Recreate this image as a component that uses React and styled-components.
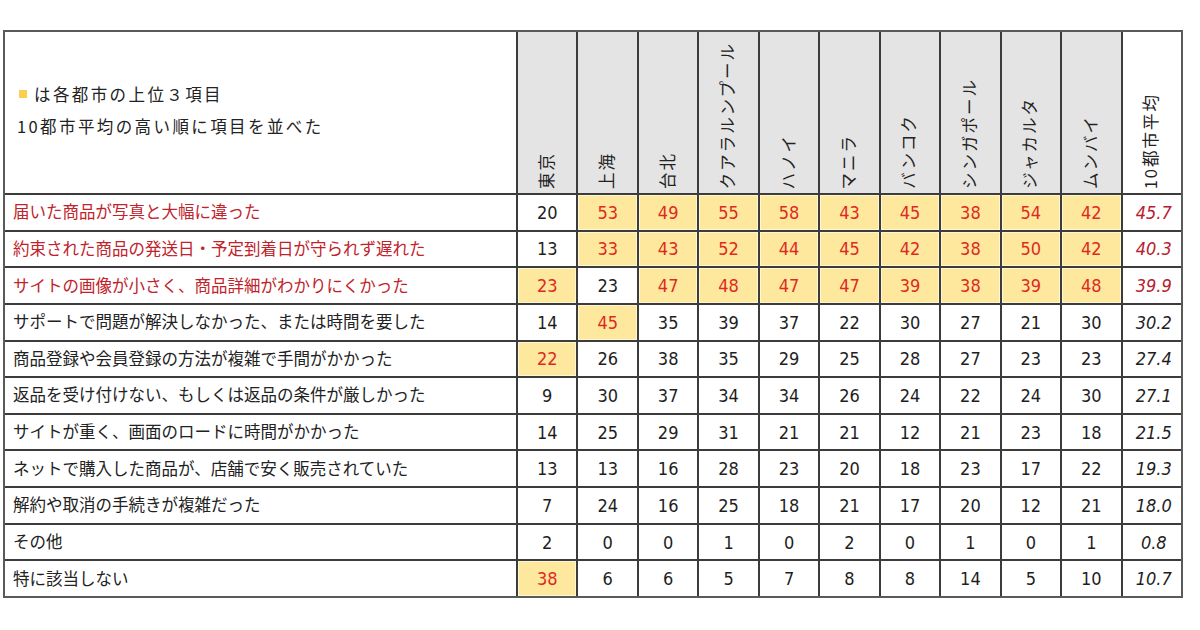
import styled, { createGlobalStyle } from 'styled-components';

const GlobalStyle = createGlobalStyle`
  html, body {
    margin: 0;
    padding: 0;
    background: #fff;
  }
  body {
    font-family: "Noto Sans CJK JP", "Noto Sans", sans-serif;
    color: #222;
  }
`;

const cities = [
  '東京', '上海', '台北', 'クアラルンプール', 'ハノイ',
  'マニラ', 'バンコク', 'シンガポール', 'ジャカルタ', 'ムンバイ',
];

const rows = [
  { label: '届いた商品が写真と大幅に違った', top: true, v: [20, 53, 49, 55, 58, 43, 45, 38, 54, 42], avg: '45.7', h: [1, 2, 3, 4, 5, 6, 7, 8, 9] },
  { label: '約束された商品の発送日・予定到着日が守られず遅れた', top: true, v: [13, 33, 43, 52, 44, 45, 42, 38, 50, 42], avg: '40.3', h: [1, 2, 3, 4, 5, 6, 7, 8, 9] },
  { label: 'サイトの画像が小さく、商品詳細がわかりにくかった', top: true, v: [23, 23, 47, 48, 47, 47, 39, 38, 39, 48], avg: '39.9', h: [0, 2, 3, 4, 5, 6, 7, 8, 9] },
  { label: 'サポートで問題が解決しなかった、または時間を要した', v: [14, 45, 35, 39, 37, 22, 30, 27, 21, 30], avg: '30.2', h: [1] },
  { label: '商品登録や会員登録の方法が複雑で手間がかかった', v: [22, 26, 38, 35, 29, 25, 28, 27, 23, 23], avg: '27.4', h: [0] },
  { label: '返品を受け付けない、もしくは返品の条件が厳しかった', v: [9, 30, 37, 34, 34, 26, 24, 22, 24, 30], avg: '27.1', h: [] },
  { label: 'サイトが重く、画面のロードに時間がかかった', v: [14, 25, 29, 31, 21, 21, 12, 21, 23, 18], avg: '21.5', h: [] },
  { label: 'ネットで購入した商品が、店舗で安く販売されていた', v: [13, 13, 16, 28, 23, 20, 18, 23, 17, 22], avg: '19.3', h: [] },
  { label: '解約や取消の手続きが複雑だった', v: [7, 24, 16, 25, 18, 21, 17, 20, 12, 21], avg: '18.0', h: [] },
  { label: 'その他', v: [2, 0, 0, 1, 0, 2, 0, 1, 0, 1], avg: '0.8', h: [] },
  { label: '特に該当しない', v: [38, 6, 6, 5, 7, 8, 8, 14, 5, 10], avg: '10.7', h: [0] },
];

const Page = styled.div`
  padding: 30px 0 0 3px;
`;

const Grid = styled.div`
  width: 1180px;
  height: 568px;
  box-sizing: border-box;
  display: grid;
  grid-template-columns: 511px repeat(11, 1fr);
  grid-template-rows: 161px repeat(11, 1fr);
  gap: 2px;
  background: #3c3c3c;
  border: 2px solid #5a5a5a;
`;

const NoteCell = styled.div`
  background: #fff;
  display: flex;
  flex-direction: column;
  justify-content: center;
  padding: 0 0 6px 12px;
  font-size: 16.5px;
  letter-spacing: 2.4px;
  line-height: 32px;
  color: #222;
`;

const NoteLine = styled.div`
  display: flex;
  align-items: center;
`;

const Swatch = styled.span`
  width: 8px;
  height: 8px;
  background: #fccf4e;
  margin: 0 7px 0 2px;
`;

const HeadCell = styled.div`
  background: ${(p) => (p.$plain ? '#fff' : '#e4e4e4')};
  display: flex;
  align-items: flex-end;
  justify-content: center;
  padding-bottom: 4px;
  padding-right: 3px;
`;

const VText = styled.span`
  writing-mode: vertical-rl;
  text-orientation: sideways;
  transform: rotate(180deg);
  font-size: 16.5px;
  letter-spacing: 2px;
  line-height: 20px;
  color: #222;
  white-space: nowrap;
`;

const LabelCell = styled.div`
  background: #fff;
  display: flex;
  align-items: center;
  padding-left: 8px;
  padding-bottom: 2px;
  font-size: 16.5px;
  color: ${(p) => (p.$top ? '#c1232b' : '#222')};
  white-space: nowrap;
  overflow: hidden;
`;

const NumCell = styled.div`
  background: ${(p) => (p.$hl ? '#fee89e' : '#fff')};
  box-shadow: ${(p) => (p.$hl ? 'inset 0 0 0 1px #fff6d2' : 'none')};
  display: flex;
  align-items: center;
  justify-content: center;
  font-family: "DejaVu Sans Condensed", "DejaVu Sans", sans-serif;
  font-size: 18px;
  color: ${(p) => (p.$hl ? '#de2a22' : '#1e1e1e')};
`;

const AvgCell = styled(NumCell)`
  font-style: italic;
  padding-left: 4px;
  color: ${(p) => (p.$top ? '#b8202e' : '#1e1e1e')};
`;

export default function App() {
  return (
    <>
      <GlobalStyle />
      <Page>
        <Grid>
          <NoteCell>
            <NoteLine>
              <Swatch />
              は各都市の上位３項目
            </NoteLine>
            <NoteLine>10都市平均の高い順に項目を並べた</NoteLine>
          </NoteCell>
          {cities.map((c) => (
            <HeadCell key={c}>
              <VText>{c}</VText>
            </HeadCell>
          ))}
          <HeadCell $plain>
            <VText>10都市平均</VText>
          </HeadCell>

          {rows.map((r) => (
            <Row key={r.label} row={r} />
          ))}
        </Grid>
      </Page>
    </>
  );
}

function Row({ row }) {
  return (
    <>
      <LabelCell $top={row.top}>{row.label}</LabelCell>
      {row.v.map((n, i) => (
        <NumCell key={i} $hl={row.h.includes(i)}>
          {n}
        </NumCell>
      ))}
      <AvgCell $top={row.top}>{row.avg}</AvgCell>
    </>
  );
}
